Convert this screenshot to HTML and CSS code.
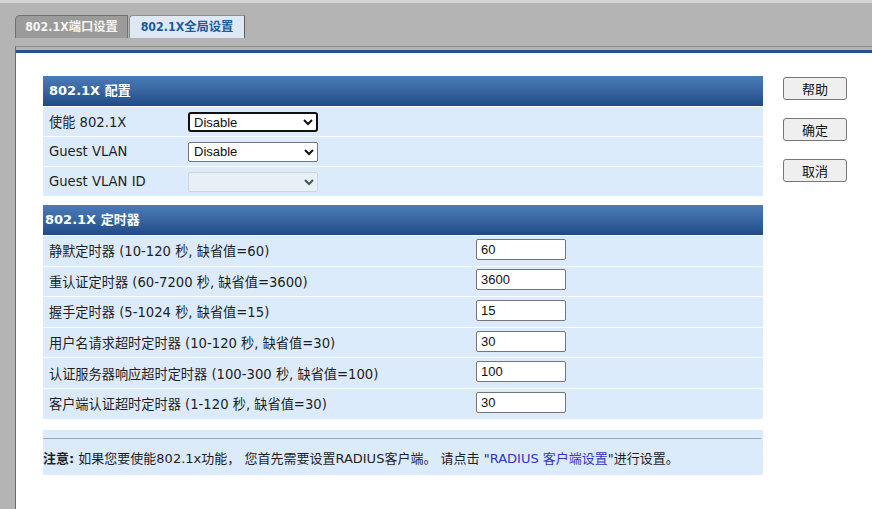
FILE: index.html
```html
<!DOCTYPE html>
<html lang="zh-CN">
<head>
    <title>802.1X全局设置</title>
    <meta charset="UTF-8">
    <link rel="stylesheet" href="styles.css">
</head>
<body>
    <div class="tabs">
        <div class="tab">802.1X端口设置</div>
        <div class="tab active">802.1X全局设置</div>
    </div>
    <div class="panel">
        <div class="panel-inner">
            <div class="forms">
                <div class="section">
                    <div class="sec-head">802.1X 配置</div>
                    <div class="row">
                        <span class="label cfg">使能 802.1X</span>
                        <select class="sel focus"><option>Disable</option><option>Enable</option></select>
                    </div>
                    <div class="row">
                        <span class="label cfg">Guest VLAN</span>
                        <select class="sel"><option>Disable</option><option>Enable</option></select>
                    </div>
                    <div class="row">
                        <span class="label cfg">Guest VLAN ID</span>
                        <select class="sel" disabled><option></option></select>
                    </div>
                </div>

                <div class="section timers">
                    <div class="sec-head second">802.1X 定时器</div>
                    <div class="row tall">
                        <span class="label wide">静默定时器 (10-120 秒, 缺省值=60)</span>
                        <input class="num" type="text" value="60">
                    </div>
                    <div class="row tall">
                        <span class="label wide">重认证定时器 (60-7200 秒, 缺省值=3600)</span>
                        <input class="num" type="text" value="3600">
                    </div>
                    <div class="row tall">
                        <span class="label wide">握手定时器 (5-1024 秒, 缺省值=15)</span>
                        <input class="num" type="text" value="15">
                    </div>
                    <div class="row tall">
                        <span class="label wide">用户名请求超时定时器 (10-120 秒, 缺省值=30)</span>
                        <input class="num" type="text" value="30">
                    </div>
                    <div class="row tall">
                        <span class="label wide">认证服务器响应超时定时器 (100-300 秒, 缺省值=100)</span>
                        <input class="num" type="text" value="100">
                    </div>
                    <div class="row tall">
                        <span class="label wide">客户端认证超时定时器 (1-120 秒, 缺省值=30)</span>
                        <input class="num" type="text" value="30">
                    </div>
                </div>

                <div class="note">
                    <hr>
                    <p><b>注意:</b> 如果您要使能802.1x功能， 您首先需要设置RADIUS客户端。 请点击 "<a href="#">RADIUS 客户端设置</a>"进行设置。</p>
                </div>
            </div>

            <div class="buttons">
                <button class="btn">帮助</button>
                <button class="btn">确定</button>
                <button class="btn">取消</button>
            </div>
        </div>
    </div>
</body>
</html>
```

FILE: styles.css
```css
html, body {
    margin: 0;
    height: 100%;
}

body {
    display: flex;
    flex-direction: column;
    background-color: #b4b4b4;
    border-top: 3px solid #d4d4d4;
    box-sizing: border-box;
    font-family: "DejaVu Sans", "Noto Sans CJK SC", sans-serif;
    font-size: 13px;
    color: #1e1e1e;
    overflow: hidden;
}

.tabs {
    display: flex;
    padding: 12px 0 0 15px;
    height: 23px;
}

.tab {
    box-sizing: border-box;
    width: 113px;
    height: 23px;
    line-height: 23px;
    text-align: center;
    font-family: "DejaVu Sans Condensed", "Liberation Sans", "Noto Sans CJK SC", sans-serif;
    font-size: 12.3px;
    font-weight: bold;
    color: #f4f4f4;
    background-color: #9b9b9b;
    border: 1px solid #6f6f6f;
    border-bottom: none;
    border-top-left-radius: 5px;
}

.tab.active {
    width: 116px;
    margin-left: 1px;
    color: #1b5c9d;
    background-color: #dfe9f6;
    border-color: #8e8e8e;
    border-right-color: #5e5e5e;
    border-top-left-radius: 4px;
}

.panel {
    flex: 1;
    display: flex;
    margin: 8px 0 0 15px;
    border-top: 1px solid #8a8a8a;
    border-left: 1px solid #6b6b6b;
    padding-top: 3px;
}

.panel-inner {
    flex: 1;
    display: flex;
    align-items: flex-start;
    gap: 20px;
    padding: 23px 0 0 27px;
    background-color: #fff;
    border-top: 3px solid #2b4e8e;
}

.forms {
    width: 720px;
}

.sec-head {
    height: 30px;
    line-height: 30px;
    padding-left: 6px;
    font-weight: bold;
    color: #fff;
    background: linear-gradient(#4a7cb7, #3a68a3 45%, #1f4a85);
}

.sec-head.second {
    padding-left: 2px;
}

.timers {
    margin-top: 9px;
}

.row {
    display: flex;
    align-items: center;
    height: 29px;
    border-top: 1px solid #fff;
    background-color: #dcebfb;
}

.row.tall {
    height: 29.6px;
}

.label {
    box-sizing: border-box;
    padding-left: 6px;
    font-size: 13.2px;
}

.label.cfg {
    width: 145px;
}

.label.wide {
    width: 433px;
}

.sel {
    box-sizing: border-box;
    width: 130px;
    height: 20px;
    padding: 0 1px;
    font-family: "Liberation Sans", sans-serif;
    font-size: 13px;
    color: #111;
    background-color: #fff;
    border: 1px solid #767676;
    border-radius: 2px;
}

.sel.focus {
    border: 2px solid #101010;
    border-radius: 3px;
    padding: 0;
}

.sel:disabled {
    background-color: #edf1f6;
    border-color: #c9ccd1;
}

.num {
    box-sizing: border-box;
    width: 90px;
    height: 21px;
    margin-top: -3px;
    padding: 0 4px;
    font-family: "Liberation Sans", sans-serif;
    font-size: 13px;
    color: #111;
    border: 1px solid #767676;
    border-radius: 2px;
}

.note {
    margin-top: 11px;
    height: 45px;
    padding-top: 8px;
    box-sizing: border-box;
    background-color: #dcebfb;
}

.note hr {
    margin: 0 2px 0 0;
    border: none;
    border-top: 1px solid #a3a3a3;
    height: 0;
}

.note p {
    margin: 12px 0 0;
    line-height: 16px;
}

.note a {
    color: #3434c8;
    text-decoration: none;
}

.buttons {
    display: flex;
    flex-direction: column;
    gap: 18px;
    padding-top: 1px;
}

.btn {
    width: 64px;
    height: 23px;
    padding: 0;
    font-family: "Noto Sans CJK SC", sans-serif;
    font-size: 13px;
    color: #111;
    background-color: #efefef;
    border: 1px solid #767676;
    border-radius: 3px;
}
```
